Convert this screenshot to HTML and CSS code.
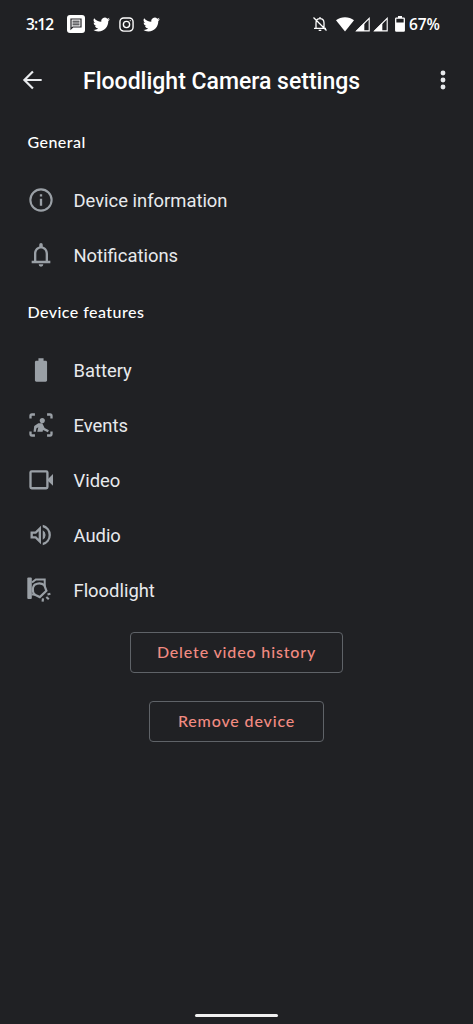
FILE: index.html
```html
<!DOCTYPE html>
<html lang="en">
<head>
<meta charset="utf-8">
<title>Floodlight Camera settings</title>
<link rel="stylesheet" href="styles.css">
</head>
<body>
<div class="screen">
  <div class="status">
    <span class="clock">3:12</span>
    <svg class="s-msg" viewBox="0 0 18 18"><rect width="18" height="18" rx="3" fill="#fff"/><path d="M4 13.8V4h10v8H5.8z" fill="none" stroke="#202124" stroke-width="1.2"/><path d="M5.500 6.200h7M5.500 8h7M5.500 9.800h7" stroke="#202124" stroke-width="1"/></svg>
    <svg class="s-bird" viewBox="0 0 24 24"><path d="M23.95 4.57a10 10 0 0 1-2.82.77 4.96 4.96 0 0 0 2.16-2.72c-.95.55-2 .95-3.13 1.18a4.92 4.92 0 0 0-8.38 4.48C7.69 8.09 4.07 6.13 1.64 3.16a4.92 4.92 0 0 0 1.52 6.57 4.9 4.9 0 0 1-2.23-.61v.06a4.92 4.92 0 0 0 3.95 4.83 5 5 0 0 1-2.21.08 4.94 4.94 0 0 0 4.6 3.42A9.87 9.87 0 0 1 0 19.54a13.99 13.99 0 0 0 7.56 2.21c9.05 0 14-7.5 14-13.98l-.02-.64a9.94 9.94 0 0 0 2.41-2.56z"/></svg>
    <svg class="s-insta line" viewBox="0 0 24 24" stroke-width="2.2"><rect x="1.500" y="1.500" width="21" height="21" rx="6"/><circle cx="12" cy="12" r="5"/><circle cx="18" cy="6" r=".4" stroke-width="1.600"/></svg>
    <svg class="s-bird" viewBox="0 0 24 24"><path d="M23.95 4.57a10 10 0 0 1-2.82.77 4.96 4.96 0 0 0 2.16-2.72c-.95.55-2 .95-3.13 1.18a4.92 4.92 0 0 0-8.38 4.48C7.69 8.09 4.07 6.13 1.64 3.16a4.92 4.92 0 0 0 1.52 6.57 4.9 4.9 0 0 1-2.23-.61v.06a4.92 4.92 0 0 0 3.95 4.83 5 5 0 0 1-2.21.08 4.94 4.94 0 0 0 4.6 3.42A9.87 9.87 0 0 1 0 19.54a13.99 13.99 0 0 0 7.56 2.21c9.05 0 14-7.5 14-13.98l-.02-.64a9.94 9.94 0 0 0 2.41-2.56z"/></svg>
    <span class="spacer"></span>
    <svg class="s-mute line" viewBox="0 0 16 16" stroke-width="1.300"><path d="M4 12V7c0-2.600 1.700-4.300 4-4.300S12 4.400 12 7v5M2 12.300h12M1.500 1.500l13 13M8 1v2M6.700 14.300h2.600"/></svg>
    <svg class="s-wifi" viewBox="0 0 18 15"><path d="M0 3.300C5-.9 13-.9 18 3.300L9 14.500z"/></svg>
    <svg class="s-sig" viewBox="0 0 15 15"><path d="M1.600 13.900L14.200 1.300v12.600z" fill="none" stroke="#fff" stroke-width="1.100"/><path d="M1 14L9.300 5.700V14z"/></svg>
    <svg class="s-sig" viewBox="0 0 15 15"><path d="M1.600 13.900L14.200 1.300v12.600z" fill="none" stroke="#fff" stroke-width="1.100"/><path d="M1 14L9.300 5.700V14z"/></svg>
    <svg class="s-batt" viewBox="0 0 10 16"><path d="M3 0h4v2H3z"/><rect x=".7" y="2.200" width="8.600" height="13" rx=".6" fill="none" stroke="#fff" stroke-width="1.300"/><path d="M1 6.500h8V15H1z"/></svg>
    <span class="percent">67%</span>
  </div>

  <header class="appbar">
    <svg class="back" viewBox="0 0 24 24"><path d="M20.300 12H5.700M12.800 4.700L5.500 12l7.300 7.300" fill="none" stroke="#e8eaed" stroke-width="1.900"/></svg>
    <h1 class="title">Floodlight Camera settings</h1>
    <svg class="more" viewBox="0 0 24 24"><circle cx="12" cy="6" r="2.100"/><circle cx="12" cy="12" r="2.100"/><circle cx="12" cy="18" r="2.100"/></svg>
  </header>

  <h2 class="heading">General</h2>
  <div class="row">
    <svg class="icon" viewBox="0 0 24 24"><path d="M11 7h2v2h-2zm0 4h2v6h-2zm1-9a10 10 0 1 0 0 20 10 10 0 0 0 0-20zm0 18.200a8.200 8.200 0 1 1 0-16.400 8.200 8.200 0 0 1 0 16.400z"/></svg>
    <span class="label">Device information</span>
  </div>
  <div class="row">
    <svg class="icon" viewBox="0 0 24 24"><path d="M10 20h4a2 2 0 0 1-4 0zM18 17v-6c0-3.070-1.640-5.640-4.500-6.320V3.200a1.500 1.500 0 0 0-3 0v1.480C7.630 5.360 6 7.920 6 11v6H4v2h16v-2zm-2 0H8v-6c0-2.480 1.510-4.500 4-4.500s4 2.020 4 4.500z"/></svg>
    <span class="label">Notifications</span>
  </div>

  <h2 class="heading">Device features</h2>
  <div class="row">
    <svg class="icon" viewBox="0 0 24 24"><path d="M16 4h-1.800V2H9.800v2H8c-.7 0-1.200.5-1.200 1.200v15.600c0 .7.500 1.200 1.200 1.200h8c.7 0 1.200-.5 1.200-1.200V5.200C17.200 4.500 16.700 4 16 4z"/></svg>
    <span class="label">Battery</span>
  </div>
  <div class="row">
    <svg class="icon" viewBox="0 0 24 24"><path d="M3 6.500V4.200Q3 3 4.200 3h2.600M17.200 3h2.600Q21 3 21 4.200v2.300M21 17.500v2.300q0 1.200-1.200 1.200h-2.600M6.800 21H4.200Q3 21 3 19.800v-2.300" fill="none" stroke="#9aa0a6" stroke-width="2"/><circle cx="13.100" cy="8.200" r="2.200"/><path d="M6.200 12.800l3.500-2.300h3.400l2 4 3.700 1.900-.9 1.800-4.200-2-.3 1.600H8.800l.9-3.800-1.700 1-.4 2.800H5.600z"/></svg>
    <span class="label">Events</span>
  </div>
  <div class="row">
    <svg class="icon" viewBox="0 0 24 24"><rect x="3" y="4.600" width="14.500" height="14.500" rx="1" fill="none" stroke="#9aa0a6" stroke-width="2"/><path d="M18 11.200l4.300-4.300v10L18 12.900z"/></svg>
    <span class="label">Video</span>
  </div>
  <div class="row">
    <svg class="icon" viewBox="0 0 24 24"><path d="M3 9v6h4l5 5V4L7 9zm7-.17v6.340L7.830 13H5v-2h2.830zM13.500 8v8a4.500 4.500 0 0 0 0-8zM13.500 3.230v2.060a7 7 0 0 1 0 13.420v2.060a9 9 0 0 0 0-17.540z"/></svg>
    <span class="label">Audio</span>
  </div>
  <div class="row">
    <svg class="icon" viewBox="0 0 28 28"><rect x=".3" y="1.500" width="4.500" height="21.500" rx="1"/><path d="M5 6.500L8.800 3.500h8.900v7M4.500 18.500h4" fill="none" stroke="#9aa0a6" stroke-width="2"/><path d="M7.600 8.800Q13 5.800 17.300 9.200l2.100 5.600-6.600 6.300-5.500-2.700Q4 13 7.600 8.800z" fill="none" stroke="#9aa0a6" stroke-width="2.200"/><path d="M20.500 18.500l2.900-.7M19.300 21l2.500 2.300M16 22.300l-.4 3.300" stroke="#9aa0a6" stroke-width="2.200"/></svg>
    <span class="label">Floodlight</span>
  </div>

  <div class="actions">
    <button class="btn delete">Delete video history</button>
    <button class="btn remove">Remove device</button>
  </div>
  <div class="homebar"></div>
</div>
</body>
</html>
```
FILE: styles.css
```css
* { box-sizing: border-box; }
body { margin: 0; background: #202124; }
.screen {
  width: 473px;
  height: 1024px;
  display: flex;
  flex-direction: column;
  background: #202124;
  color: #e8eaed;
  font-family: Roboto, sans-serif;
}
svg { display: block; flex: none; fill: #fff; }
.line { fill: none; stroke: #fff; }

.status {
  height: 48px;
  padding: 0 32px 0 26px;
  display: flex;
  align-items: center;
  color: #fff;
  font: 600 15.500px "Open Sans", sans-serif;
}
.clock { width: 40.500px; letter-spacing: -0.9px; }
.s-msg { width: 18px; height: 18px; }
.s-bird { width: 17px; height: 17px; margin-left: 8px; }
.s-insta { width: 15px; height: 15px; margin-left: 9px; }
.s-insta + .s-bird { margin-left: 9px; }
.spacer { flex: 1; }
.s-mute { width: 16px; height: 16px; margin-right: 8px; }
.s-wifi { width: 18px; height: 15px; }
.s-sig { width: 15px; height: 15px; margin-left: 1px; }
.s-sig + .s-sig { margin-left: 3px; }
.s-batt { width: 10px; height: 16px; margin: 0 4px 0 7px; }
.percent { width: 32px; letter-spacing: -0.1px; white-space: nowrap; }

.appbar {
  height: 64px;
  padding: 0 16px 0 18px;
  display: flex;
  align-items: center;
}
.back { width: 28px; height: 28px; }
.title {
  flex: 1;
  margin: 3px 0 0 37px;
  font-size: 23px;
  font-weight: 500;
  line-height: 30px;
  color: #fff;
}
.more { width: 28px; height: 28px; fill: #e8eaed; }

.heading {
  height: 60px;
  margin: 0;
  padding-left: 27.500px;
  display: flex;
  align-items: center;
  font: 500 16px/20px Lato, sans-serif;
  letter-spacing: 0.450px;
  color: #fff;
}
.row {
  height: 55.100px;
  padding-left: 27.300px;
  display: flex;
  align-items: center;
}
.icon { width: 28px; height: 28px; fill: #9aa0a6; }
.label { margin: 2px 0 0 18.200px; font-size: 18.400px; line-height: 24px; }

.actions {
  padding-top: 14.500px;
  display: flex;
  flex-direction: column;
  align-items: center;
  gap: 28px;
}
.btn {
  height: 41px;
  padding: 0 0 3px;
  border: 1px solid #5f6368;
  border-radius: 4px;
  background: none;
  color: #f28b82;
  font: 500 16px Lato, sans-serif;
  letter-spacing: 0.850px;
}
.delete { width: 213px; }
.remove { width: 175px; }
.homebar {
  width: 83px;
  height: 3px;
  margin: auto auto 7px;
  border-radius: 2px;
  background: #f1f1f1;
}
```
